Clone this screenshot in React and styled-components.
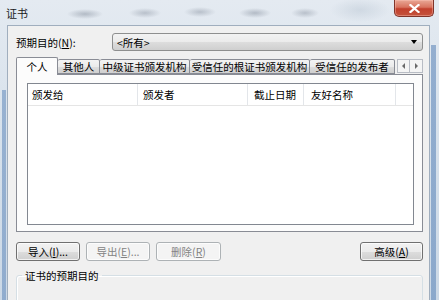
import React from "react";
import styled, { createGlobalStyle } from "styled-components";

const Global = createGlobalStyle`
  html, body { margin: 0; padding: 0; }
  body {
    width: 439px;
    height: 300px;
    overflow: hidden;
    font-family: "Noto Sans CJK SC", "Noto Sans", sans-serif;
    font-size: 10.5px;
    color: #000;
  }
`;

const Window = styled.div`
  width: 439px;
  height: 300px;
  display: flex;
  flex-direction: column;
  overflow: hidden;
  background:
    linear-gradient(90deg, transparent 0 2px, rgba(96, 136, 186, 0.55) 2px 6px, transparent 6px) left bottom / 8px 70% no-repeat,
    linear-gradient(90deg, transparent 0 2px, rgba(96, 136, 186, 0.6) 2px 7px, transparent 7px) right bottom / 10px 85% no-repeat,
    linear-gradient(180deg, #e4eaf1 0%, #d8e2ec 40%, #cbd8e6 100%);
`;

const TitleBar = styled.div`
  flex: none;
  height: 25px;
  display: flex;
  align-items: flex-start;
  justify-content: space-between;
  padding: 0 6px 0 6px;
  background:
    radial-gradient(ellipse 18px 5px at 85px 14px, rgba(120, 130, 145, 0.45), transparent),
    radial-gradient(ellipse 16px 5px at 145px 13px, rgba(120, 130, 145, 0.4), transparent),
    radial-gradient(ellipse 16px 5px at 200px 12px, rgba(120, 130, 145, 0.4), transparent),
    radial-gradient(ellipse 16px 5px at 255px 13px, rgba(120, 130, 145, 0.45), transparent),
    radial-gradient(ellipse 14px 5px at 305px 13px, rgba(120, 130, 145, 0.4), transparent),
    radial-gradient(ellipse 30px 12px at 360px 10px, rgba(170, 185, 200, 0.35), transparent);
`;

const Title = styled.span`
  margin-top: 5px;
  font-size: 11px;
  color: #1a1a1a;
`;

const CloseButton = styled.div`
  width: 40px;
  height: 17px;
  margin-right: -1px;
  display: flex;
  align-items: center;
  justify-content: center;
  box-sizing: border-box;
  border: 1px solid #80342a;
  border-top: none;
  border-radius: 0 0 5px 5px;
  background: linear-gradient(180deg, #e9a896 0%, #d8735f 45%, #c2402d 55%, #c4533c 100%);
  box-shadow: inset 0 0 0 1px rgba(255, 200, 190, 0.4);
`;

const Client = styled.div`
  flex: 1;
  margin: 0 9px 0 7px;
  border: 1px solid #a0aebe;
  border-bottom: none;
  background: #f0f0f0;
  padding: 7px 6px 0 8px;
  display: flex;
  flex-direction: column;
`;

const PurposeRow = styled.div`
  display: flex;
  align-items: center;
  height: 18px;
`;

const Label = styled.span`
  width: 96px;
  flex: none;
`;

const Combo = styled.div`
  flex: 1;
  height: 18px;
  box-sizing: border-box;
  border: 1px solid #8e8f8f;
  border-radius: 3px;
  background: linear-gradient(180deg, #f2f2f2 0%, #ebebeb 50%, #dddddd 51%, #cfcfcf 100%);
  display: flex;
  align-items: center;
  justify-content: space-between;
  padding: 0 4px 0 4px;
`;

const Arrow = styled.span`
  width: 0;
  height: 0;
  border-left: 3px solid transparent;
  border-right: 3px solid transparent;
  border-top: 4px solid #000;
  margin-right: 1px;
`;

const TabStrip = styled.div`
  margin-top: 6px;
  height: 17px;
  display: flex;
  align-items: flex-end;
  position: relative;
  z-index: 1;
`;

const Tab = styled.div`
  width: ${(p) => p.w}px;
  flex: none;
  box-sizing: border-box;
  height: ${(p) => (p.active ? 18 : 15)}px;
  margin-bottom: ${(p) => (p.active ? -1 : 0)}px;
  border: 1px solid #898c95;
  border-bottom: ${(p) => (p.active ? "none" : "1px solid #898c95")};
  border-left: ${(p) => (p.first || p.active ? "1px solid #898c95" : "none")};
  border-radius: 2px 2px 0 0;
  background: ${(p) =>
    p.active ? "#fcfcfc" : "linear-gradient(180deg, #f3f3f3 0%, #ebebeb 50%, #dedede 51%, #cfcfcf 100%)"};
  display: flex;
  align-items: ${(p) => (p.active ? "flex-start" : "center")};
  justify-content: center;
  padding-top: ${(p) => (p.active ? 1 : 0)}px;
  white-space: nowrap;
  overflow: hidden;
`;

const Scroller = styled.div`
  margin-left: 2px;
  margin-bottom: 1px;
  display: flex;
  height: 14px;
`;

const ScrollBtn = styled.div`
  width: 13px;
  box-sizing: border-box;
  border: 1px solid #b8bcc4;
  background: #f4f4f4;
  display: flex;
  align-items: center;
  justify-content: center;
  & + & { border-left: none; }
`;

const Tri = styled.span`
  width: 0;
  height: 0;
  border-top: 3px solid transparent;
  border-bottom: 3px solid transparent;
  ${(p) => (p.dir === "left" ? "border-right: 3px solid #6a6a6a;" : "border-left: 3px solid #6a6a6a;")}
`;

const Panel = styled.div`
  height: 158px;
  box-sizing: border-box;
  border: 1px solid #898c95;
  background: #fcfcfc;
  padding: 8px 8px 6px 10px;
  display: flex;
`;

const ListView = styled.div`
  flex: 1;
  border: 1px solid #828790;
  background: #fff;
`;

const Header = styled.div`
  height: 21px;
  display: flex;
  border-bottom: 1px solid #e5e5e5;
`;

const Column = styled.div`
  width: ${(p) => p.w}px;
  flex: none;
  box-sizing: border-box;
  border-right: 1px solid #e3e6ea;
  padding-left: ${(p) => p.pad}px;
  display: flex;
  align-items: center;
`;

const ButtonRow = styled.div`
  margin-top: 10px;
  display: flex;
  gap: 6px;
`;

const Button = styled.div`
  width: ${(p) => p.w}px;
  height: 19px;
  box-sizing: border-box;
  border: 1px solid ${(p) => (p.disabled ? "#adb2b5" : "#707070")};
  border-radius: 3px;
  background: ${(p) =>
    p.disabled ? "#f4f4f4" : "linear-gradient(180deg, #f2f2f2 0%, #ebebeb 50%, #dddddd 51%, #cfcfcf 100%)"};
  color: ${(p) => (p.disabled ? "#838383" : "#000")};
  display: flex;
  align-items: center;
  justify-content: center;
  box-shadow: inset 0 0 0 1px rgba(255, 255, 255, 0.7);
  ${(p) => (p.push ? "margin-left: auto;" : "")}
`;

const GroupBox = styled.fieldset`
  margin: 7px 0 0 0;
  padding: 0;
  height: 40px;
  border: 1px solid #d5dfe5;
  border-radius: 3px;
  box-shadow: inset 1px 1px 0 #fff;
  legend {
    margin-left: 5px;
    padding: 0 3px;
  }
`;

const columns = [
  { label: "颁发给", w: 110, pad: 4 },
  { label: "颁发者", w: 110, pad: 5 },
  { label: "截止日期", w: 56, pad: 6 },
  { label: "友好名称", w: 92, pad: 7 },
];

const tabs = [
  { label: "个人", w: 42, active: true },
  { label: "其他人", w: 42 },
  { label: "中级证书颁发机构", w: 90 },
  { label: "受信任的根证书颁发机构", w: 120 },
  { label: "受信任的发布者", w: 85 },
];

export default function App() {
  return (
    <Window>
      <Global />
      <TitleBar>
        <Title>证书</Title>
        <CloseButton>
          <svg width="11" height="9" viewBox="0 0 11 9">
            <path d="M1.5 1 L9.5 8 M9.5 1 L1.5 8" stroke="#fff" strokeWidth="2.2" strokeLinecap="square" />
          </svg>
        </CloseButton>
      </TitleBar>
      <Client>
        <PurposeRow>
          <Label>
            预期目的(<u>N</u>):
          </Label>
          <Combo>
            <span>&lt;所有&gt;</span>
            <Arrow />
          </Combo>
        </PurposeRow>
        <TabStrip>
          {tabs.map((t, i) => (
            <Tab key={t.label} w={t.w} active={t.active} first={i === 0}>
              {t.label}
            </Tab>
          ))}
          <Scroller>
            <ScrollBtn>
              <Tri dir="left" />
            </ScrollBtn>
            <ScrollBtn>
              <Tri dir="right" />
            </ScrollBtn>
          </Scroller>
        </TabStrip>
        <Panel>
          <ListView>
            <Header>
              {columns.map((c) => (
                <Column key={c.label} w={c.w} pad={c.pad}>
                  {c.label}
                </Column>
              ))}
            </Header>
          </ListView>
        </Panel>
        <ButtonRow>
          <Button w={64}>
            导入(<u>I</u>)...
          </Button>
          <Button w={64} disabled>
            导出(<u>E</u>)...
          </Button>
          <Button w={65} disabled>
            删除(<u>R</u>)
          </Button>
          <Button w={63} push>
            高级(<u>A</u>)
          </Button>
        </ButtonRow>
        <GroupBox>
          <legend>证书的预期目的</legend>
        </GroupBox>
      </Client>
    </Window>
  );
}
